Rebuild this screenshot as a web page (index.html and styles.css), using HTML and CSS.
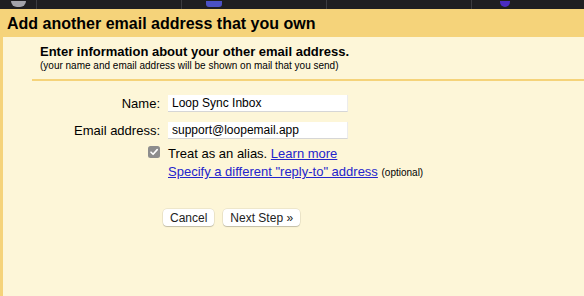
FILE: index.html
```html
<!DOCTYPE html>
<html lang="en">
<head>
  <meta charset="UTF-8" />
  <meta name="viewport" content="width=device-width, initial-scale=1.0" />
  <title>Add another email address that you own</title>
  <link rel="stylesheet" href="styles.css">
</head>
<body>
  <div class="tabbar">
    <div class="tab"><span class="dot grey"></span></div>
    <div class="tab"><span class="dot blue"></span></div>
    <div class="tab"></div>
    <div class="tab"><span class="dot purple"></span></div>
  </div>

  <div class="header">Add another email address that you own</div>

  <div class="panel">
    <div class="intro">
      <div class="intro-title">Enter information about your other email address.</div>
      <div class="intro-note">(your name and email address will be shown on mail that you send)</div>
    </div>
    <div class="rule"></div>

    <div class="form">
      <label class="label" for="name">Name:</label>
      <input class="field" type="text" id="name" value="Loop Sync Inbox">

      <label class="label" for="email">Email address:</label>
      <input class="field" type="text" id="email" value="support@loopemail.app">

      <span class="check">
        <svg width="12" height="12" viewBox="0 0 12 12">
          <rect x="0" y="0" width="12" height="12" rx="2.5" fill="#8d8d8d"/>
          <path d="M3 6.2 L5.1 8.3 L9.2 3.6" fill="none" stroke="#fff" stroke-width="1.6" stroke-linecap="round" stroke-linejoin="round"/>
        </svg>
      </span>
      <div class="option alias">Treat as an alias. <a href="#">Learn more</a></div>

      <span></span>
      <div class="option reply"><a href="#">Specify a different "reply-to" address</a> <span class="small">(optional)</span></div>
    </div>

    <div class="actions">
      <button class="btn">Cancel</button>
      <button class="btn">Next Step »</button>
    </div>
  </div>
</body>
</html>
```

FILE: styles.css
```css
body {
  margin: 0;
  font-family: "Liberation Sans", Arial, sans-serif;
  color: #000;
  background: #fdf6d8;
  height: 296px;
  overflow: hidden;
}

.tabbar {
  height: 9px;
  background: #1f1f21;
  display: flex;
  padding-left: 36px;
  overflow: hidden;
}
.tab {
  flex: none;
  box-sizing: border-box;
  width: 145px;
  border-left: 1px solid #3d3d40;
  position: relative;
}
.tab:last-child {
  width: 113px;
}
.dot {
  position: absolute;
  bottom: 2px;
  height: 6px;
  border-radius: 0 0 6px 6px;
}
.dot.grey {
  left: -26px;
  width: 15px;
  background: #a3a3a9;
}
.dot.blue {
  left: 24px;
  width: 16px;
  background: #4b51c4;
  border-radius: 0 0 3px 3px;
}
.dot.purple {
  left: 28px;
  width: 10px;
  background: #4a2bc2;
}

.header {
  height: 28px;
  line-height: 29px;
  background: #f5d37a;
  padding-left: 7px;
  font-size: 16px;
  font-weight: bold;
}

.panel {
  border-left: 3px solid #f5d37a;
  height: 259px;
  background: #fdf6d8;
}

.intro {
  padding: 7px 0 0 37px;
}
.intro-title {
  font-size: 13px;
  font-weight: bold;
  line-height: 16px;
}
.intro-note {
  font-size: 10px;
  line-height: 12px;
}
.rule {
  margin: 7px 0 0 29px;
  border-top: 2px solid #f5d37a;
}

.form {
  display: grid;
  grid-template-columns: 157px 180px;
  column-gap: 8px;
  row-gap: 10px;
  margin-top: 14px;
  align-items: center;
}
.label {
  text-align: right;
  font-size: 13px;
}
.field {
  box-sizing: border-box;
  width: 180px;
  height: 17px;
  border: none;
  border-bottom: 1px solid #d6d6d6;
  border-right: 1px solid #ececec;
  background: #fff;
  padding: 0 4px;
  font-family: "Liberation Sans", Arial, sans-serif;
  font-size: 12px;
  color: #000;
}
.check {
  justify-self: end;
  display: flex;
  margin-top: -6px;
}
.option {
  font-size: 13px;
  white-space: nowrap;
  line-height: 15px;
}
.option.alias {
  margin-top: -3px;
}
.option.reply {
  margin-top: -7px;
}
.option a {
  color: #2424cc;
}
.small {
  font-size: 10px;
}

.actions {
  display: flex;
  gap: 9px;
  padding: 29px 0 0 160px;
}
.btn {
  height: 17px;
  padding: 0 7px;
  background: #fff;
  border: none;
  border-radius: 4px;
  box-shadow: 0 0 0 0.5px rgba(0, 0, 0, 0.12), 0 1px 1px rgba(0, 0, 0, 0.18);
  font-family: "Liberation Sans", Arial, sans-serif;
  font-size: 12px;
  color: #222;
  cursor: pointer;
}
```
